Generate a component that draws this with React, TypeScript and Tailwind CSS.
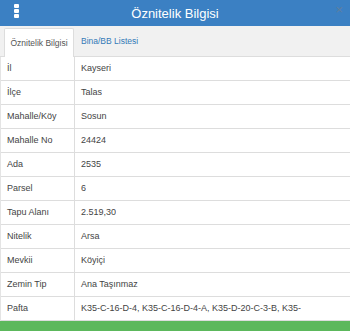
const rows: [string, string][] = [
  ["İl", "Kayseri"],
  ["İlçe", "Talas"],
  ["Mahalle/Köy", "Sosun"],
  ["Mahalle No", "24424"],
  ["Ada", "2535"],
  ["Parsel", "6"],
  ["Tapu Alanı", "2.519,30"],
  ["Nitelik", "Arsa"],
  ["Mevkii", "Köyiçi"],
  ["Zemin Tip", "Ana Taşınmaz"],
  ["Pafta", "K35-C-16-D-4, K35-C-16-D-4-A, K35-D-20-C-3-B, K35-"],
];

export default function App() {
  return (
    <div className="w-[350px] h-[331px] overflow-hidden bg-white font-['Liberation_Sans',Arial,sans-serif]">
      {/* Header */}
      <div className="relative h-[26px] bg-[#3b80c3] flex items-center justify-center">
        <div className="absolute left-[14px] top-[4px] flex flex-col gap-[1px]">
          <span className="block w-[5px] h-[4px] rounded-[1px] bg-white" />
          <span className="block w-[5px] h-[4px] rounded-[1px] bg-white" />
          <span className="block w-[5px] h-[4px] rounded-[1px] bg-white" />
        </div>
        <span className="text-[13px] text-white leading-none">Öznitelik Bilgisi</span>
        <span className="absolute right-[7px] top-[3px] text-[13px] leading-none text-[#5f7f9f]">×</span>
      </div>

      {/* Tabs */}
      <div className="h-[31px] bg-[#f1f1f1] border-b border-[#dddddd] flex items-end pl-[4px]">
        <div className="h-[29px] w-[70px] -mb-px bg-white border border-b-0 border-[#dddddd] rounded-t-[2px] flex items-center justify-center">
          <span className="text-[8.5px] text-[#555555] whitespace-nowrap">Öznitelik Bilgisi</span>
        </div>
        <div className="h-[29px] flex items-center pl-[7px]">
          <span className="text-[8.5px] text-[#337ab7] whitespace-nowrap">Bina/BB Listesi</span>
        </div>
      </div>

      {/* Table */}
      <div className="border-l border-[#e4e4e4]">
        {rows.map(([label, value]) => (
          <div key={label} className="flex h-[24px] border-b border-[#dddddd]">
            <div className="w-[74px] shrink-0 border-r border-[#dddddd] flex items-center pl-[6px]">
              <span className="text-[9px] text-[#444444] whitespace-nowrap">{label}</span>
            </div>
            <div className="flex items-center pl-[6px] overflow-hidden">
              <span className="text-[9px] text-[#444444] whitespace-nowrap">{value}</span>
            </div>
          </div>
        ))}
      </div>

      <div className="h-[12px] bg-[#5cb85c]" />
    </div>
  );
}
